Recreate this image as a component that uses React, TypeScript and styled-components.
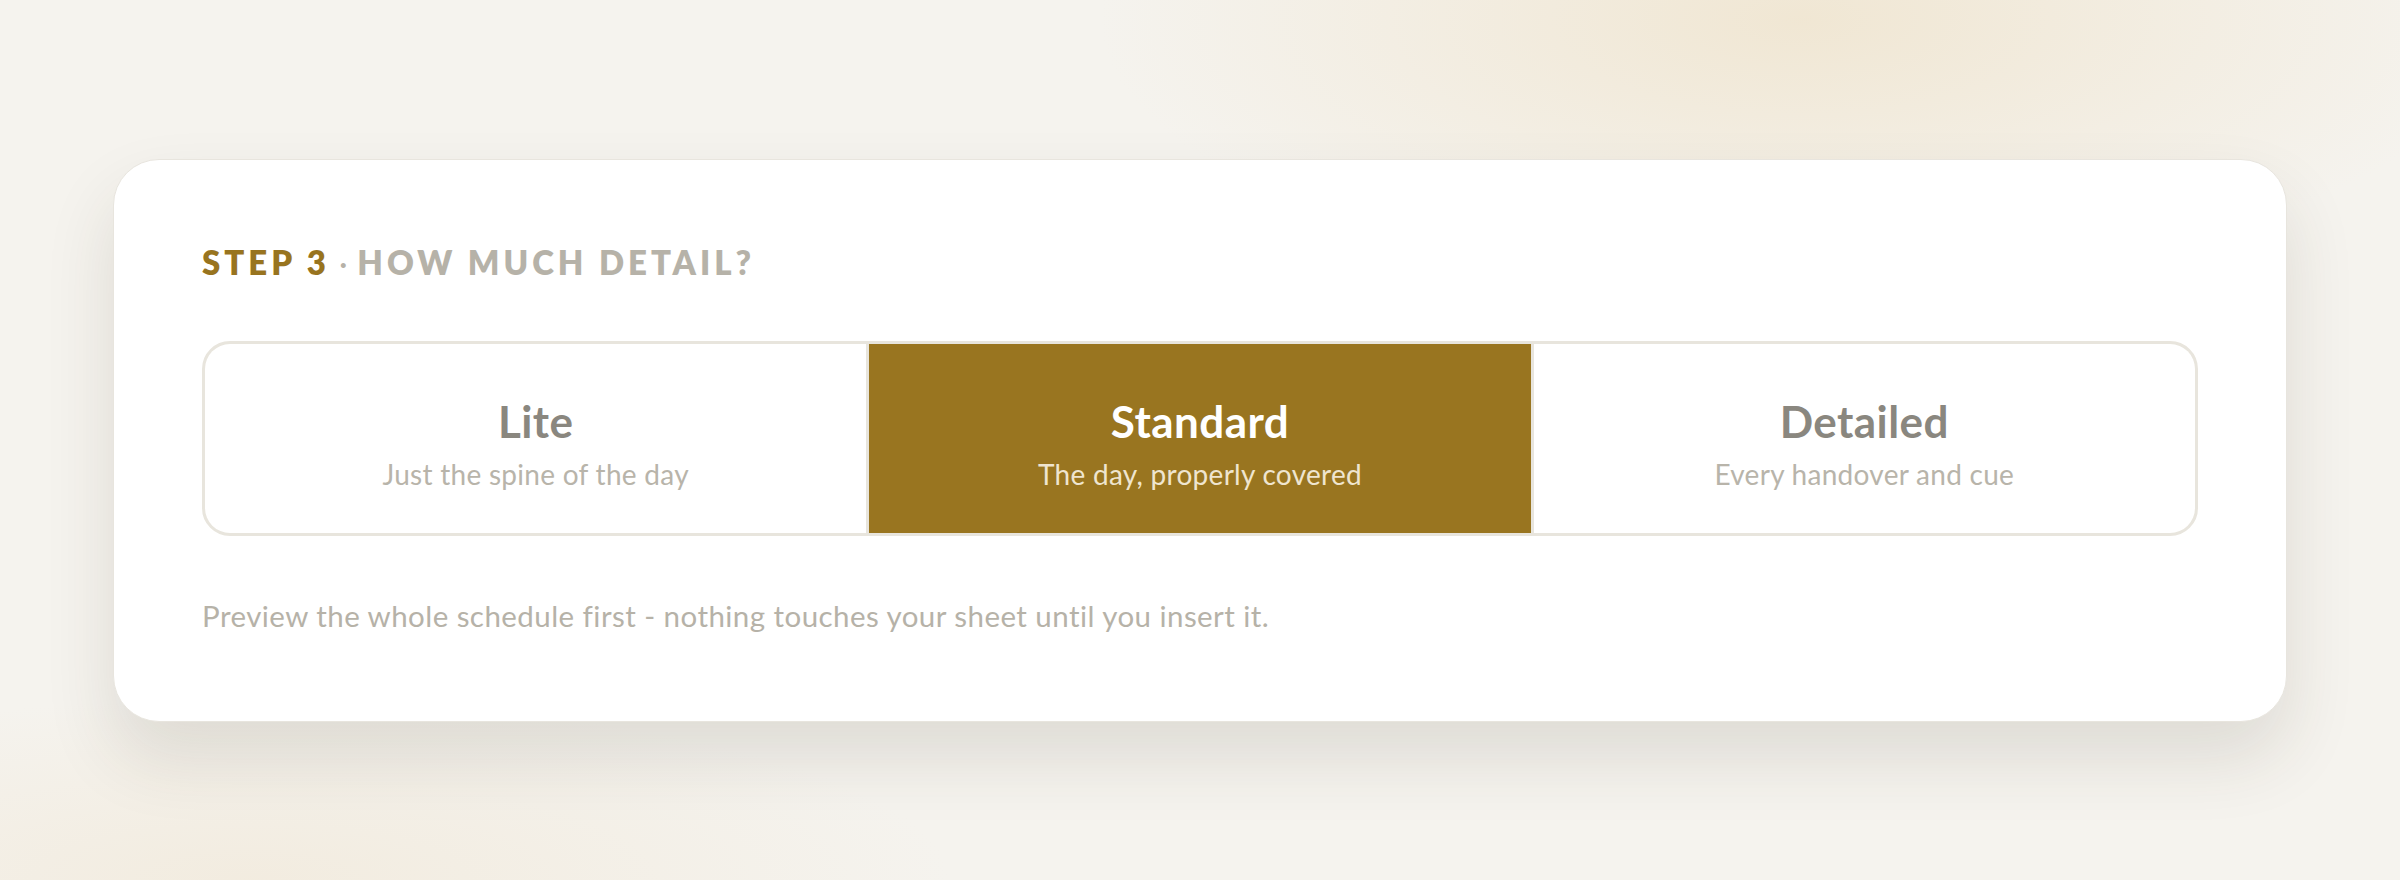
import styled, { createGlobalStyle } from "styled-components";

const GlobalStyle = createGlobalStyle`
  html, body {
    margin: 0;
    padding: 0;
  }
  body {
    font-family: "Lato", "Noto Sans", sans-serif;
    background: #f4f2ec;
  }
`;

interface Level {
  name: string;
  hint: string;
}

const levels: Level[] = [
  { name: "Lite", hint: "Just the spine of the day" },
  { name: "Standard", hint: "The day, properly covered" },
  { name: "Detailed", hint: "Every handover and cue" },
];

const App = () => {
  const selected = "Standard";

  return (
    <Page>
      <GlobalStyle />
      <Card>
        <StepTitle>
          <StepNo>Step 3</StepNo>
          <Dot> · </Dot>
          <StepText>How much detail?</StepText>
        </StepTitle>

        <Segmented>
          {levels.map((lv) => (
            <Segment key={lv.name} $active={lv.name === selected}>
              <SegName $active={lv.name === selected}>{lv.name}</SegName>
              <SegHint $active={lv.name === selected}>{lv.hint}</SegHint>
            </Segment>
          ))}
        </Segmented>

        <Note>Preview the whole schedule first - nothing touches your sheet until you insert it.</Note>
      </Card>
    </Page>
  );
};

const Page = styled.div`
  box-sizing: border-box;
  width: 100%;
  height: 880px;
  padding: 159px 113px 0;
  background:
    radial-gradient(ellipse 1000px 380px at 1800px 20px, rgba(240, 230, 210, 0.95), rgba(240, 230, 210, 0) 70%),
    radial-gradient(ellipse 1000px 260px at 250px 880px, rgba(242, 235, 222, 0.9), rgba(242, 235, 222, 0) 70%),
    #f5f3ee;
`;

const Card = styled.div`
  box-sizing: border-box;
  height: 563px;
  padding: 86px 88px 0;
  background: #ffffff;
  border: 1.5px solid #e8e5de;
  border-radius: 46px;
  box-shadow: 0 36px 70px rgba(60, 50, 30, 0.12);
`;

const StepTitle = styled.div`
  font-size: 33px;
  line-height: 32px;
  font-weight: 800;
  letter-spacing: 0.12em;
  text-transform: uppercase;
  margin-bottom: 63px;
`;

const StepNo = styled.span`
  color: #98741f;
`;

const Dot = styled.span`
  color: #b6b2a8;
  font-weight: 400;
  letter-spacing: 0.02em;
`;

const StepText = styled.span`
  color: #b6b2a8;
`;

const Segmented = styled.div`
  display: grid;
  grid-template-columns: 1fr 1fr 1fr;
  gap: 3px;
  height: 195px;
  box-sizing: border-box;
  border: 3px solid #e8e5dd;
  border-radius: 28px;
  background: #e8e5dd;
  overflow: hidden;
`;

const Segment = styled.div<{ $active: boolean }>`
  display: flex;
  flex-direction: column;
  align-items: center;
  justify-content: center;
  gap: 14px;
  padding-top: 10px;
  background: ${(p) => (p.$active ? "#997520" : "#ffffff")};
`;

const SegName = styled.div<{ $active: boolean }>`
  font-size: 44px;
  line-height: 46px;
  font-weight: 700;
  letter-spacing: 0.01em;
  color: ${(p) => (p.$active ? "#ffffff" : "#8a877f")};
`;

const SegHint = styled.div<{ $active: boolean }>`
  font-size: 28px;
  line-height: 32px;
  letter-spacing: 0.01em;
  color: ${(p) => (p.$active ? "#efe5cf" : "#b8b4aa")};
`;

const Note = styled.p`
  margin: 62px 0 0;
  font-size: 29.5px;
  line-height: 36px;
  letter-spacing: 0.015em;
  color: #b6b2a8;
`;

export default App;
